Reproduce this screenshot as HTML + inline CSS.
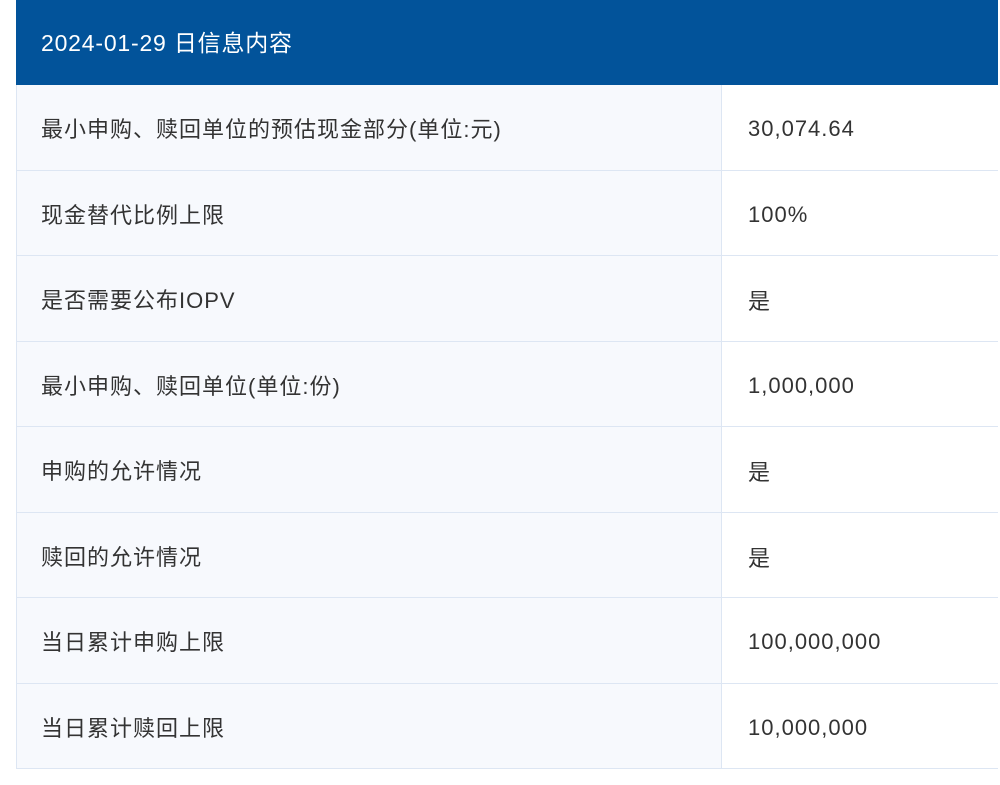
<!DOCTYPE html>
<html><head><meta charset="utf-8"><style>
body{margin:0;background:#fff;width:1000px;height:785px;overflow:hidden;font-family:"Liberation Sans","Noto Sans CJK SC",sans-serif;}
.hd{position:absolute;left:16px;top:0;width:982px;height:85px;background:#02539a;color:#fff;font-size:23px;letter-spacing:0.8px;line-height:87px;padding-left:25px;box-sizing:border-box;}
.r{position:absolute;left:16px;width:982px;height:85.5px;border-bottom:1.5px solid #dde6f3;box-sizing:border-box;font-size:22px;letter-spacing:1px;color:#333;}
.a{position:absolute;left:0;top:0;width:706px;height:100%;background:#f7f9fd;border-left:1px solid #dde6f3;border-right:1.5px solid #dde6f3;box-sizing:border-box;padding-left:24px;padding-top:2px;display:flex;align-items:center;}
.b{position:absolute;left:732px;top:0;height:100%;padding-top:4px;box-sizing:border-box;display:flex;align-items:center;}
</style></head><body>
<div class="hd">2024-01-29 日信息内容</div>
<div class="r" style="top:85px"><div class="a">最小申购、赎回单位的预估现金部分(单位:元)</div><div class="b">30,074.64</div></div>
<div class="r" style="top:170.5px"><div class="a">现金替代比例上限</div><div class="b">100%</div></div>
<div class="r" style="top:256px"><div class="a">是否需要公布IOPV</div><div class="b">是</div></div>
<div class="r" style="top:341.5px"><div class="a">最小申购、赎回单位(单位:份)</div><div class="b">1,000,000</div></div>
<div class="r" style="top:427px"><div class="a">申购的允许情况</div><div class="b">是</div></div>
<div class="r" style="top:512.5px"><div class="a">赎回的允许情况</div><div class="b">是</div></div>
<div class="r" style="top:598px"><div class="a">当日累计申购上限</div><div class="b">100,000,000</div></div>
<div class="r" style="top:683.5px"><div class="a">当日累计赎回上限</div><div class="b">10,000,000</div></div>
</body></html>
